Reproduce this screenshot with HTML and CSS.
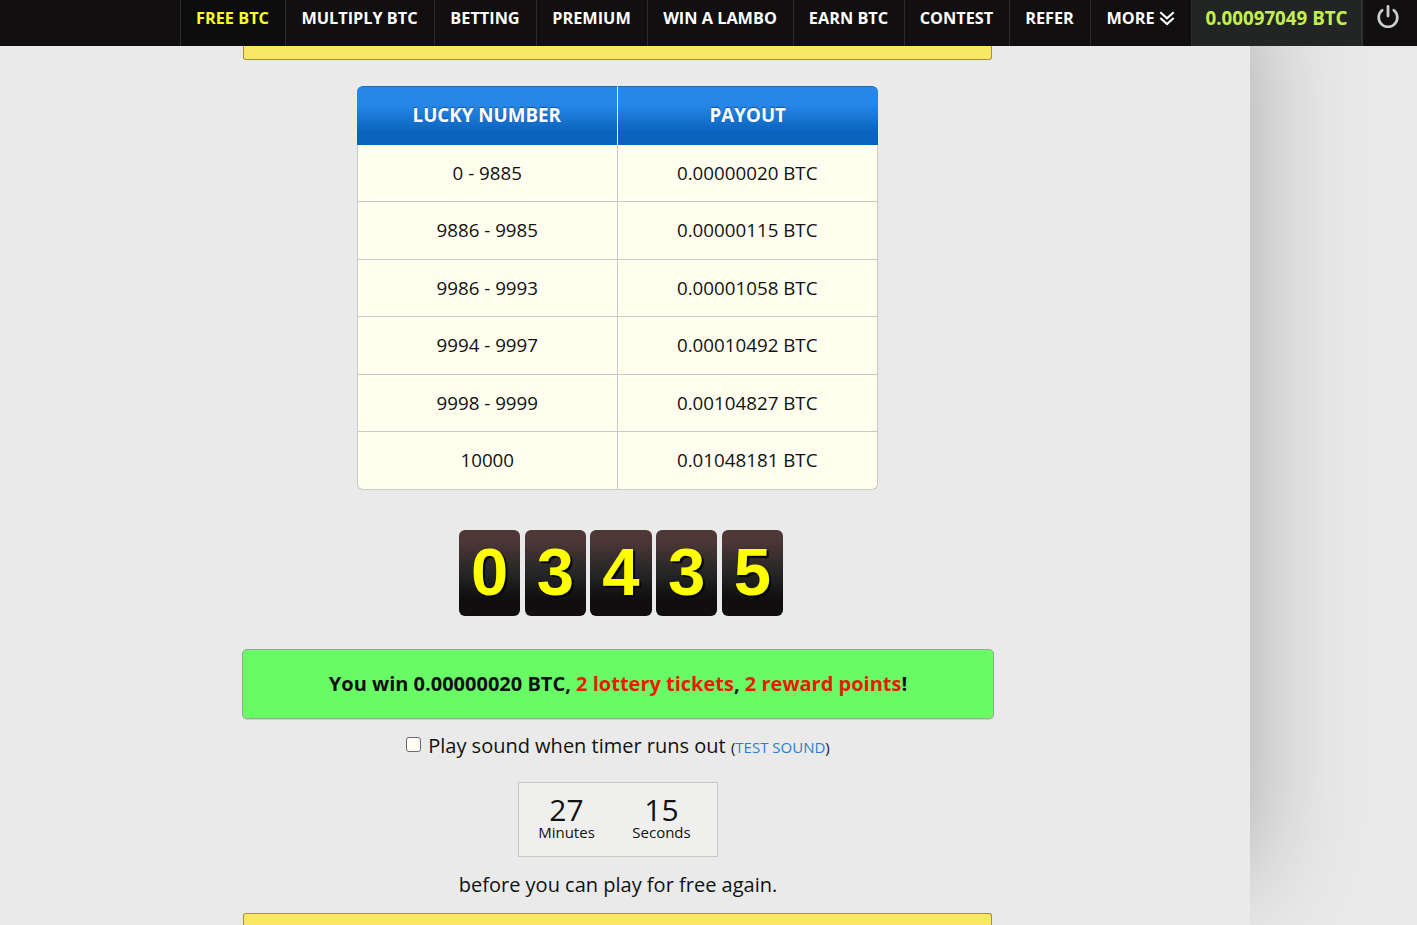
FILE: index.html
```html
<!DOCTYPE html>
<html lang="en">
<head>
	<meta charset="UTF-8">
	<meta name="viewport" content="width=device-width, initial-scale=1.0">
	<title>Free BTC</title>
	<link rel="stylesheet" href="styles.css">
</head>
<body>
<nav class="top-bar">
	<a class="nav-item active">FREE BTC</a>
	<a class="nav-item">MULTIPLY BTC</a>
	<a class="nav-item">BETTING</a>
	<a class="nav-item">PREMIUM</a>
	<a class="nav-item">WIN A LAMBO</a>
	<a class="nav-item">EARN BTC</a>
	<a class="nav-item">CONTEST</a>
	<a class="nav-item">REFER</a>
	<a class="nav-item">MORE
		<svg class="chevrons" width="16" height="15" viewBox="0 0 16 15"><path d="M1.3 1.2 8 7.2 14.7 1.2M1.3 7 8 13 14.7 7" fill="none" stroke="#fff" stroke-width="2.2"/></svg>
	</a>
	<a class="nav-item balance">0.00097049 BTC</a>
	<a class="nav-item power">
		<svg width="24" height="25" viewBox="0 0 24 25"><path d="M6.2 6.2A9.3 9.3 0 1 0 17.8 6.2" fill="none" stroke="#ccc" stroke-width="2.7" stroke-linecap="round"/><path d="M12 2.5V12" stroke="#ccc" stroke-width="2.8" stroke-linecap="round"/></svg>
	</a>
</nav>

<main class="page">
	<div class="content">
		<div class="notice notice-top"></div>

		<table class="payouts">
			<thead>
				<tr><th>LUCKY NUMBER</th><th>PAYOUT</th></tr>
			</thead>
			<tbody>
				<tr><td>0 - 9885</td><td>0.00000020 BTC</td></tr>
				<tr><td>9886 - 9985</td><td>0.00000115 BTC</td></tr>
				<tr><td>9986 - 9993</td><td>0.00001058 BTC</td></tr>
				<tr><td>9994 - 9997</td><td>0.00010492 BTC</td></tr>
				<tr><td>9998 - 9999</td><td>0.00104827 BTC</td></tr>
				<tr><td>10000</td><td>0.01048181 BTC</td></tr>
			</tbody>
		</table>

		<div class="digits">
			<span class="digit">0</span>
			<span class="digit">3</span>
			<span class="digit">4</span>
			<span class="digit">3</span>
			<span class="digit">5</span>
		</div>

		<div class="result">You win 0.00000020 BTC, <span class="bonus">2 lottery tickets</span>, <span class="bonus">2 reward points</span>!</div>

		<label class="sound">
			<input type="checkbox" class="sound-check">
			<span>Play sound when timer runs out <small class="test">(<a class="test-link">TEST SOUND</a>)</small></span>
		</label>

		<div class="timer">
			<div class="timer-part">
				<span class="amount">27</span>
				<span class="period">Minutes</span>
			</div>
			<div class="timer-part">
				<span class="amount">15</span>
				<span class="period">Seconds</span>
			</div>
		</div>

		<p class="again">before you can play for free again.</p>
		<div class="notice notice-bottom"></div>
	</div>
</main>
</body>
</html>
```

FILE: styles.css
```css
* {
	box-sizing: border-box;
}

body {
	margin: 0;
	height: 925px;
	overflow: hidden;
	background: #e9e9e9;
	color: #111;
	font-family: "Open Sans", sans-serif;
}

/* NAVIGATION */
.top-bar {
	position: relative;
	z-index: 2;
	display: grid;
	grid-template-columns: 105px 149px 102px 111px 146px 111px 105px 81px 101px 170px 56px;
	height: 46px;
	padding-left: 180px;
	background: #110f0f;
}

.nav-item {
	display: flex;
	justify-content: center;
	gap: 4px;
	height: 46px;
	padding-right: 1px;
	border-left: 1px solid #2c2c2c;
	color: #fff;
	font-size: 16.3px;
	font-weight: 700;
	line-height: 36px;
	white-space: nowrap;
}

.active {
	background: #0d0c0c;
	color: #ff2;
}

.chevrons {
	margin-top: 11px;
}

.balance {
	padding-right: 0;
	background: #232525;
	color: #c4f04e;
	font-size: 18.75px;
}

.power {
	padding: 4px 4px 0 0;
	border-left: 2px solid #303030;
}

/* PAGE */
.page {
	width: 1250px;
	height: 879px;
	background: #eaeaea;
	box-shadow: 0 -50px 100px rgba(0, 0, 0, 0.28);
}

.content {
	display: flex;
	flex-direction: column;
	align-items: center;
	width: 752px;
	margin-left: 242px;
}

.notice {
	width: 749px;
	margin-right: 1px;
	border: 1px solid #a89232;
	background: #f9e864;
}

.notice-top {
	height: 14px;
	border-top: 0;
	border-radius: 0 0 3px 3px;
}

.notice-bottom {
	height: 12px;
	border-bottom: 0;
	border-radius: 3px 3px 0 0;
}

/* PAYOUT TABLE */
.payouts {
	width: 521px;
	margin: 26px 1px 0 0;
	border-spacing: 0;
	table-layout: fixed;
	font-size: 18.75px;
	text-align: center;
}

.payouts th {
	height: 59px;
	padding: 0 0 4px;
	border-top: 1px solid #1769ba;
	background: linear-gradient(#2787e8 30%, #0963bd 78%);
	color: #fff;
	text-shadow: 0 -1px 1px #15539b;
}

.payouts th:first-child {
	border-right: 1px solid #e9f1f8;
	border-radius: 6px 0 0 0;
}

.payouts th:last-child {
	border-radius: 0 6px 0 0;
}

.payouts td {
	height: 58px;
	padding: 0 0 3px;
	border-right: 1px solid #c9c9c9;
	border-bottom: 1px solid #c9c9c9;
	background: #fffeef;
}

.payouts tr:nth-child(odd) td {
	height: 57px;
	padding-bottom: 2px;
}

.payouts td:first-child {
	border-left: 1px solid #c9c9c9;
}

.payouts tr:last-child td:first-child {
	border-radius: 0 0 0 6px;
}

.payouts tr:last-child td:last-child {
	border-radius: 0 0 6px 0;
}

/* ROLLED NUMBER */
.digits {
	display: flex;
	gap: 4.4px;
	margin: 40px 0 0 6px;
}

.digit {
	width: 61.3px;
	height: 86px;
	border-radius: 6px;
	background: linear-gradient(#4e3737 12%, #252626 50%, #100e0e 80%);
	color: #ff0;
	font: bold 67px/84px "Liberation Sans", sans-serif;
	text-align: center;
	text-shadow: 2px 2px 1px #000;
}

.result {
	width: 752px;
	height: 70px;
	margin-top: 33px;
	border: 1px solid #94aa8f;
	border-radius: 5px;
	background: #68fb66;
	box-shadow: 0 1px 1px #ccc;
	font-size: 20px;
	font-weight: 700;
	line-height: 68px;
	text-align: center;
}

.bonus {
	color: #e81b05;
}

.sound {
	display: flex;
	align-items: center;
	height: 53px;
	font-size: 20px;
}

.sound-check {
	appearance: none;
	width: 15px;
	height: 15px;
	margin: 0 7px 3px 0;
	border: 1px solid #666676;
	border-radius: 3px;
	background: #fffdf2;
}

.test {
	font-size: 15px;
}

.test-link {
	color: #277fd0;
}

/* COUNTDOWN */
.timer {
	display: grid;
	grid-template-columns: 95px 95px;
	width: 200px;
	height: 75px;
	margin-top: 10px;
	border: 1px solid #c8c8c8;
	background: #efefee;
}

.timer-part {
	display: flex;
	flex-direction: column;
	align-items: center;
	padding-top: 13px;
}

.amount {
	font-size: 30px;
	line-height: 28px;
}

.period {
	font-size: 15px;
	line-height: 17px;
}

.again {
	height: 56px;
	margin: 0;
	font-size: 20px;
	line-height: 55px;
}
```
